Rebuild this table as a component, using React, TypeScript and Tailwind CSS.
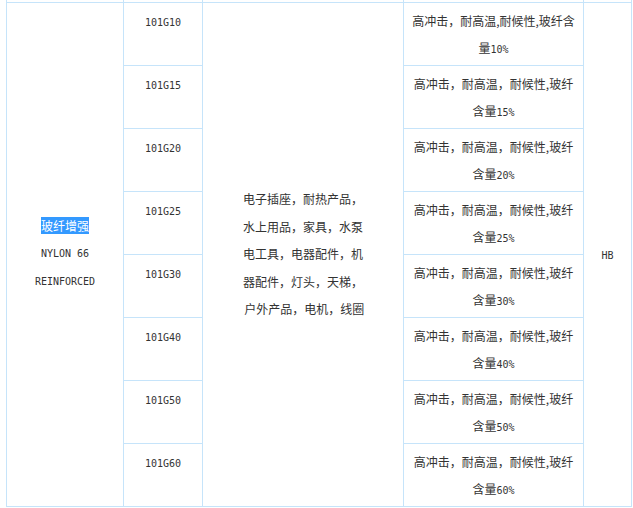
import React from "react"

const grades = [
  { code: "101G10", l1: "高冲击，耐高温,耐候性,玻纤含", l2: "量", pct: "10%" },
  { code: "101G15", l1: "高冲击，耐高温，耐候性,玻纤", l2: "含量", pct: "15%" },
  { code: "101G20", l1: "高冲击，耐高温，耐候性,玻纤", l2: "含量", pct: "20%" },
  { code: "101G25", l1: "高冲击，耐高温，耐候性,玻纤", l2: "含量", pct: "25%" },
  { code: "101G30", l1: "高冲击，耐高温，耐候性,玻纤", l2: "含量", pct: "30%" },
  { code: "101G40", l1: "高冲击，耐高温，耐候性,玻纤", l2: "含量", pct: "40%" },
  { code: "101G50", l1: "高冲击，耐高温，耐候性,玻纤", l2: "含量", pct: "50%" },
  { code: "101G60", l1: "高冲击，耐高温，耐候性,玻纤", l2: "含量", pct: "60%" },
]

const uses = ["电子插座，耐热产品，", "水上用品，家具，水泵", "电工具，电器配件，机", "器配件，灯头，天梯，", "\u00a0户外产品，电机，线圈"]

const cell = "border border-[#c6e4fa] p-0"
const latin = "font-['DejaVu_Sans_Mono',monospace] text-[10px]"

export default function App() {
  return (
    <div className="w-[633px] h-[508px] overflow-hidden bg-white text-[12px] text-[#333] font-['Noto_Sans_CJK_SC',sans-serif]">
      <table className="ml-[6px] border-collapse table-fixed w-[625px]">
        <colgroup>
          <col className="w-[117px]" />
          <col className="w-[79px]" />
          <col className="w-[201px]" />
          <col className="w-[180px]" />
          <col className="w-[48px]" />
        </colgroup>
        <tbody>
          {/* tail of the row above, scrolled out of view */}
          <tr className="h-[2px]">
            <td className={`${cell} border-t-0`} />
            <td className={`${cell} border-t-0`} />
            <td className={`${cell} border-t-0`} />
            <td className={`${cell} border-t-0`} />
            <td className={`${cell} border-t-0`} />
          </tr>
          {grades.map((g, i) => (
            <tr key={g.code} className="h-[63px]">
              {i === 0 && (
                <td rowSpan={8} className={`${cell} text-center align-middle leading-[28px]`}>
                  <div>
                    <span className="bg-[#3399ff] text-white">玻纤增强</span>
                  </div>
                  <div className={latin}>NYLON 66</div>
                  <div className={latin}>REINFORCED</div>
                </td>
              )}
              <td className={`${cell} text-center align-top pt-[4px] leading-[27px]`}>
                <span className={latin}>{g.code}</span>
              </td>
              {i === 0 && (
                <td rowSpan={8} className={`${cell} text-center align-middle leading-[27.5px]`}>
                  {uses.map((u) => (
                    <div key={u}>{u}</div>
                  ))}
                </td>
              )}
              <td className={`${cell} text-center align-top pt-[4px] leading-[27px] whitespace-nowrap`}>
                <div>{g.l1}</div>
                <div>
                  {g.l2}
                  <span className={latin}>{g.pct}</span>
                </div>
              </td>
              {i === 0 && (
                <td rowSpan={8} className={`${cell} text-center align-middle`}>
                  <span className={latin}>HB</span>
                </td>
              )}
            </tr>
          ))}
        </tbody>
      </table>
    </div>
  )
}
